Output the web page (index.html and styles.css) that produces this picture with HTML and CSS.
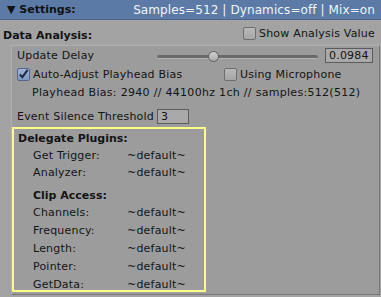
FILE: index.html
```html
<!DOCTYPE html>
<html lang="en">
<head>
  <meta charset="UTF-8" />
  <title>Settings</title>
  <link rel="stylesheet" href="styles.css">
</head>
<body>

  <div class="header">
    <span class="header-title">&#9660; Settings:</span>
    <span class="header-info">Samples=512 | Dynamics=off | Mix=on</span>
  </div>

  <div class="section-head">
    <span class="section-title">Data Analysis:</span>
    <label class="check top-check"><span class="box"></span>Show Analysis Value</label>
  </div>

  <div class="panel">
    <div class="row row-delay">
      <span class="label">Update Delay</span>
      <div class="slider"><div class="track"></div><div class="thumb"></div></div>
      <div class="field field-delay">0.0984</div>
    </div>

    <div class="row row-checks">
      <label class="check bias-check"><span class="box checked">
        <svg width="12" height="12" viewBox="0 0 12 12"><path d="M2 6.5 L4.8 9.5 L10.5 1.5" fill="none" stroke="#1d2b4a" stroke-width="2.2"/></svg>
      </span>Auto-Adjust Playhead Bias</label>
      <label class="check"><span class="box"></span>Using Microphone</label>
    </div>

    <div class="row row-bias">Playhead Bias: 2940 // 44100hz 1ch // samples:512(512)</div>

    <div class="row row-silence">
      <span class="label">Event Silence Threshold</span>
      <div class="field field-silence">3</div>
    </div>

    <div class="plugins">
      <div class="group-title">Delegate Plugins:</div>
      <div class="item"><span>Get Trigger:</span><span>~default~</span></div>
      <div class="item"><span>Analyzer:</span><span>~default~</span></div>

      <div class="group-title sub">Clip Access:</div>
      <div class="item tall"><span>Channels:</span><span>~default~</span></div>
      <div class="item tall"><span>Frequency:</span><span>~default~</span></div>
      <div class="item tall"><span>Length:</span><span>~default~</span></div>
      <div class="item tall"><span>Pointer:</span><span>~default~</span></div>
      <div class="item tall"><span>GetData:</span><span>~default~</span></div>
    </div>
  </div>

</body>
</html>
```

FILE: styles.css
```css
body {
  margin: 0;
  width: 381px;
  height: 297px;
  overflow: hidden;
  background: #a3a3a3;
  font-family: "DejaVu Sans", Verdana, sans-serif;
  font-size: 11px;
  letter-spacing: 0.2px;
  color: #141414;
}

.header {
  height: 19px;
  background: #5b7ba6;
  border-bottom: 1px solid #4a6690;
  display: flex;
  justify-content: space-between;
  align-items: center;
  padding: 0 6px 0 7px;
  letter-spacing: 0;
}

.header-title {
  font-weight: bold;
  color: #111;
}

.header-info {
  font-size: 12px;
  letter-spacing: 0.1px;
  color: #f2f4f8;
}

.section-head {
  height: 25px;
  display: flex;
  justify-content: space-between;
  padding: 0 6px 0 3px;
}

.section-title {
  font-weight: bold;
  letter-spacing: 0;
  align-self: flex-end;
  margin-bottom: 3px;
}

.top-check {
  margin-top: 7px;
  height: 12px;
}

.check {
  display: flex;
  align-items: center;
  gap: 3px;
}

.box {
  width: 11px;
  height: 11px;
  border: 1px solid #6e6e6e;
  border-radius: 2px;
  background: linear-gradient(#b9b9b9, #a6a6a6);
  display: flex;
  align-items: center;
  justify-content: center;
}

.box.checked {
  background: linear-gradient(#9fb4d8, #7f97c2);
  border-color: #55688c;
}

.panel {
  margin: 0 1px 0 11px;
  height: 250px;
  box-sizing: border-box;
  background: #9c9c9c;
  border-top: 1px solid #b0b0b0;
  border-left: 1px solid #b0b0b0;
  border-right: 1px solid #787878;
  border-bottom: 1px solid #787878;
}

.row {
  display: flex;
  align-items: center;
  padding-left: 5px;
}

.row-delay {
  height: 18px;
}

.row-delay .label {
  width: 140px;
}

.slider {
  position: relative;
  width: 161px;
  height: 12px;
  margin-top: 3px;
}

.track {
  position: absolute;
  left: 0;
  right: 0;
  top: 4px;
  height: 3px;
  border-radius: 2px;
  background: #6a6a6a;
  border-bottom: 1px solid #b4b4b4;
}

.thumb {
  position: absolute;
  left: 51px;
  top: 0;
  width: 9px;
  height: 9px;
  border-radius: 50%;
  border: 1px solid #5e5e5e;
  background: linear-gradient(#cfcfcf, #aaaaaa);
}

.field {
  box-sizing: border-box;
  height: 15px;
  border: 1px solid #5c5c5c;
  background: #a9a9a9;
  padding: 0 3px;
  line-height: 13px;
}

.field-delay {
  width: 48px;
  margin-left: 7px;
}

.row-checks {
  height: 20px;
}

.bias-check {
  width: 207px;
}

.row-bias {
  height: 16px;
  padding-left: 20px;
  letter-spacing: 0.3px;
}

.row-silence {
  height: 16px;
  margin-top: 8px;
}

.row-silence .label {
  width: 140px;
}

.field-silence {
  width: 32px;
}

.plugins {
  margin-top: 3px;
  width: 194px;
  height: 165px;
  box-sizing: border-box;
  border: 2px solid #ffff88;
  padding: 2px 0 0 4px;
}

.group-title {
  font-weight: bold;
  letter-spacing: 0;
  height: 16px;
  line-height: 16px;
}

.group-title.sub {
  margin: 7px 0 0 15px;
}

.item {
  display: flex;
  height: 17px;
  line-height: 17px;
  padding-left: 15px;
}

.item.tall {
  height: 18px;
  line-height: 18px;
}

.item span:first-child {
  width: 94px;
}
```
